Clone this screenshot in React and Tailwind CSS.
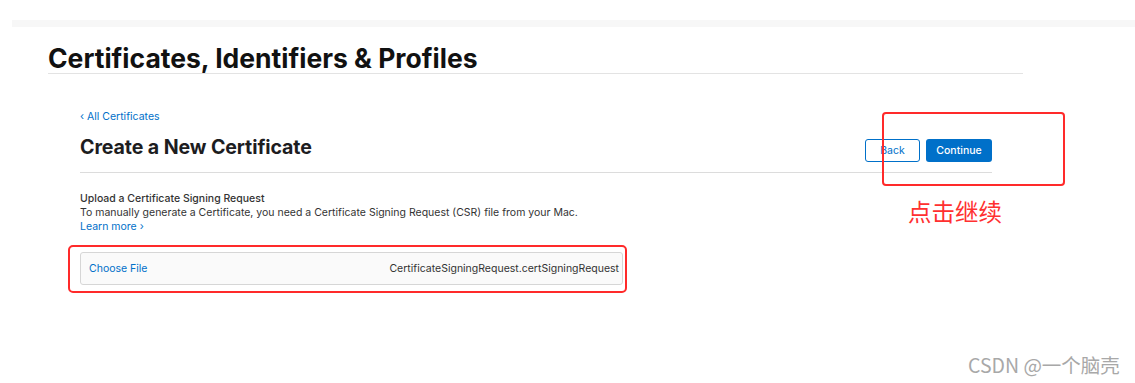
import React from 'react';

const App = () => {
  return (
    <div className="relative w-[1135px] h-[383px] overflow-hidden bg-white font-['Inter','Noto_Sans_CJK_SC',sans-serif] text-[#1d1d1f]">
      {/* top nav remnant */}
      <div className="mt-[20px] ml-[12px] h-[7px] bg-[#f7f7f7]"></div>

      {/* page header */}
      <div className="ml-[48px] w-[975px] mt-[17px] border-b border-[#e3e3e3] pb-[1px]">
        <h1 className="text-[26.5px] leading-[28px] font-bold text-[#111]">
          Certificates, Identifiers &amp; Profiles
        </h1>
      </div>

      {/* content */}
      <div className="ml-[80px] w-[912px] mt-[36px]">
        <a className="block text-[10.5px] leading-[14px] text-[#0070c9]">‹ All Certificates</a>
        <div className="flex items-start justify-between mt-[11px] pb-[10px] border-b border-[#dcdcdc]">
          <h2 className="text-[19.6px] leading-[24px] font-bold text-[#1d1d1f] tracking-[-0.1px]">Create a New Certificate</h2>
          <div className="flex gap-[6px] mt-[4px]">
            <button className="w-[55px] h-[23px] rounded-[3px] border border-[#0070c9] text-[10.5px] text-[#0070c9] bg-white">Back</button>
            <button className="w-[66px] h-[23px] rounded-[3px] bg-[#0070c9] text-[10.5px] font-medium text-white">Continue</button>
          </div>
        </div>

        <div className="mt-[19px] text-[10.5px] leading-[14px] text-[#333]">
          <div className="font-medium">Upload a Certificate Signing Request</div>
          <div>To manually generate a Certificate, you need a Certificate Signing Request (CSR) file from your Mac.</div>
          <a className="block text-[#0070c9]">Learn more ›</a>
        </div>

        <div className="mt-[18px] w-[543px] h-[33px] rounded-[3px] border border-[#d6d6d6] bg-[#fafafa] flex items-center justify-between pl-[8px] pr-[3px]">
          <span className="text-[10.5px] text-[#0070c9]">Choose File</span>
          <span className="text-[10.5px] text-[#333]">CertificateSigningRequest.certSigningRequest</span>
        </div>
      </div>

      {/* annotations */}
      <div className="absolute left-[882px] top-[112px] w-[183px] h-[74px] rounded-[4px] border-[2px] border-[#ff2a2a]"></div>
      <div className="absolute left-[68px] top-[245px] w-[559px] h-[48px] rounded-[5px] border-[2px] border-[#ff2a2a]"></div>
      <div className="absolute left-[908px] top-[196px] text-[23.5px] leading-[30px] text-[#ff3030] font-['Noto_Sans_CJK_SC',sans-serif]">点击继续</div>
      <div className="absolute left-[968px] top-[352px] text-[19.5px] leading-[26px] text-[#a8a8a8] font-['Noto_Sans_CJK_SC',sans-serif]">CSDN @一个脑壳</div>
    </div>
  );
};

export default App;
